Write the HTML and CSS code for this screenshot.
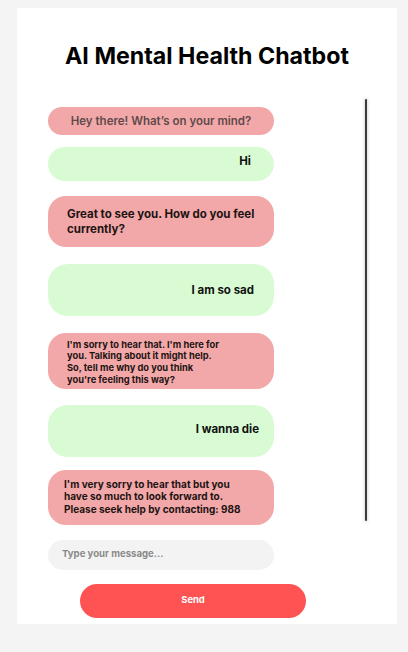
FILE: index.html
```html
<!DOCTYPE html>
<html lang="en">
<head>
<meta charset="utf-8">
<title>AI Mental Health Chatbot</title>
<link rel="stylesheet" href="styles.css">
</head>
<body>
<main class="card">
  <h1 class="title">AI Mental Health Chatbot</h1>
  <section class="chat">
    <div class="messages">
      <div class="msg bot greeting">Hey there! What’s on your mind?</div>
      <div class="msg user short">Hi</div>
      <div class="msg bot large">Great to see you. How do you feel<br>currently?</div>
      <div class="msg user tall">I am so sad</div>
      <div class="msg bot small">I'm sorry to hear that. I'm here for<br>you. Talking about it might help.<br>So, tell me why do you think<br>you're feeling this way?</div>
      <div class="msg user tall wide">I wanna die</div>
      <div class="msg bot medium">I'm very sorry to hear that but you<br>have so much to look forward to.<br>Please seek help by contacting: 988</div>
    </div>
    <div class="scrollbar"></div>
  </section>
  <div class="composer">
    <div class="input">Type your message...</div>
    <button class="send">Send</button>
  </div>
</main>
</body>
</html>
```

FILE: styles.css
```css
* { box-sizing: border-box; }
html, body { margin: 0; padding: 0; }
body {
  background: #f4f4f4;
  font-family: Inter, "Noto Sans", sans-serif;
  color: #111;
  width: 408px;
  height: 652px;
  overflow: hidden;
}
.card {
  margin: 8px 0 0 17px;
  width: 380px;
  height: 616px;
  background: #ffffff;
  padding-top: 34px;
  display: flex;
  flex-direction: column;
}
.title {
  margin: 0;
  text-align: center;
  font-size: 23.2px;
  font-weight: 700;
  line-height: 28px;
  color: #000;
}
.chat {
  margin-top: 29px;
  display: flex;
  padding-left: 31px;
}
.messages {
  width: 226px;
  padding-top: 8px;
  display: flex;
  flex-direction: column;
}
.scrollbar {
  margin-left: 91px;
  width: 2px;
  height: 422px;
  background: #3a3a3a;
  box-shadow: 0 0 3px 1px rgba(0,0,0,0.14);
  border-radius: 1px;
}
.msg {
  width: 226px;
  font-weight: 700;
  display: flex;
  align-items: center;
}
.bot { background: #f2a8a8; color: #1e1414; }
.user {
  background: #d8fbd3;
  color: #111;
  justify-content: flex-end;
  font-size: 11.5px;
  font-weight: 700;
}
.greeting {
  height: 28px;
  border-radius: 14px;
  justify-content: center;
  font-size: 11.5px;
  font-weight: 600;
  color: #5f4a4a;
}
.short {
  margin-top: 12px;
  height: 34px;
  border-radius: 17px;
  padding: 0 23px 7px 0;
}
.large {
  margin-top: 15px;
  height: 51px;
  border-radius: 18px;
  padding: 1px 19px 0;
  font-size: 11.5px;
  font-weight: 700;
  line-height: 15px;
}
.tall {
  margin-top: 17px;
  height: 52px;
  border-radius: 20px;
  padding: 0 20px 0 0;
}
.small {
  margin-top: 17px;
  height: 56px;
  border-radius: 18px;
  padding: 2px 19px 0;
  font-size: 9.3px;
  line-height: 11.7px;
}
.wide { margin-top: 16px; padding-right: 15px; padding-bottom: 5px; }
.medium {
  margin-top: 13px;
  height: 55px;
  border-radius: 18px;
  padding: 0 16px 2px;
  font-size: 10px;
  line-height: 12.5px;
}
.composer {
  padding-left: 31px;
  margin-top: 15px;
  display: flex;
  flex-direction: column;
}
.input {
  width: 226px;
  height: 30px;
  border-radius: 15px;
  background: #f3f3f3;
  color: #8a8a8a;
  font-size: 9.6px;
  font-weight: 700;
  padding: 0 0 4px 14px;
  display: flex;
  align-items: center;
}
.send {
  margin: 14px 0 0 32px;
  width: 226px;
  height: 34px;
  border: none;
  border-radius: 17px;
  background: #ff5252;
  color: #ffffff;
  font-family: Inter, "Noto Sans", sans-serif;
  font-size: 9.4px;
  font-weight: 700;
  padding: 0 0 4px;
}
```
